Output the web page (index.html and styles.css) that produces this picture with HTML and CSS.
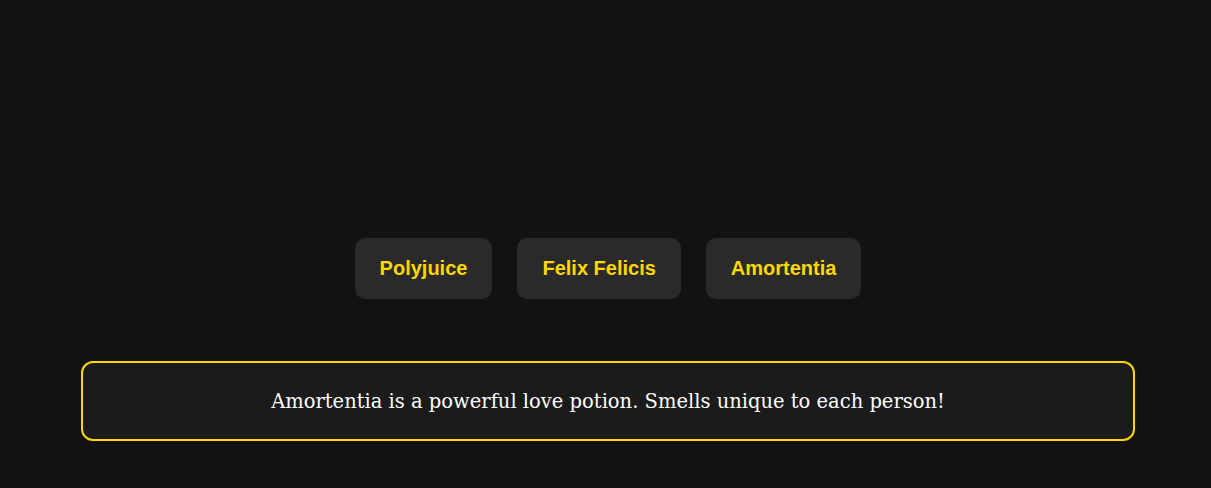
FILE: index.html
```html
<!DOCTYPE html>
<html>
<head>
<meta charset="utf-8">
<link rel="stylesheet" href="styles.css">
</head>
<body>
<div class="page">
  <div class="buttons">
    <button class="potion">Polyjuice</button>
    <button class="potion">Felix Felicis</button>
    <button class="potion">Amortentia</button>
  </div>
  <div class="info">Amortentia is a powerful love potion. Smells unique to each person!</div>
</div>
</body>
</html>
```
FILE: styles.css
```css
html, body {
  margin: 0;
  padding: 0;
  background: #121212;
  height: 100%;
}
.page {
  padding: 238px 76px 0 81px;
  display: flex;
  flex-direction: column;
  gap: 62px;
}
.buttons {
  display: flex;
  justify-content: center;
  gap: 25px;
}
.potion {
  background: #2a2a2a;
  color: #ffd700;
  border: none;
  border-radius: 10px;
  font-family: "Liberation Sans", Arial, sans-serif;
  font-weight: bold;
  font-size: 20px;
  line-height: 23px;
  padding: 19px 25px;
  cursor: pointer;
}
.info {
  background: #1b1b1b;
  border: 2px solid #ffd700;
  border-radius: 12px;
  color: #ffffff;
  font-family: "DejaVu Serif", Georgia, serif;
  font-size: 19.5px;
  line-height: 24px;
  padding: 27px 20px 25px;
  text-align: center;
}
```
